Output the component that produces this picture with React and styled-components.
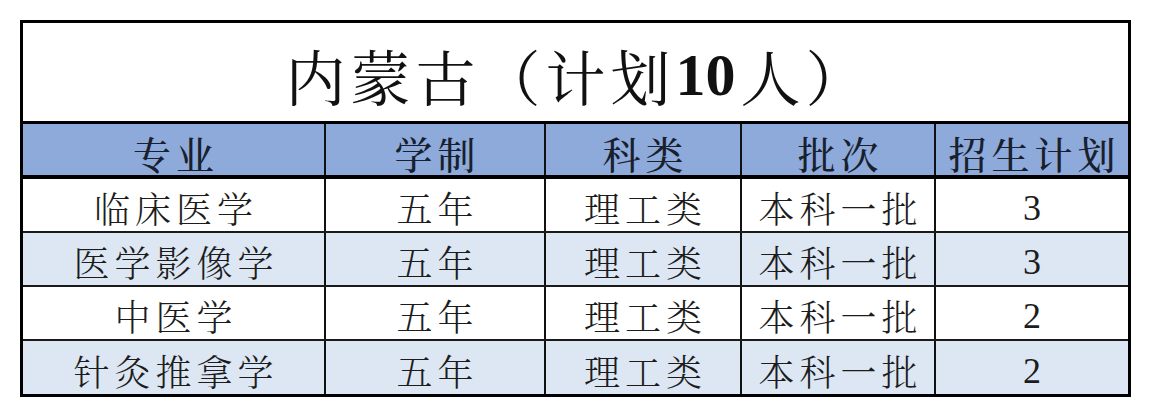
import React from "react";
import styled, { createGlobalStyle } from "styled-components";

const GlobalStyle = createGlobalStyle`
  html, body {
    margin: 0;
    padding: 0;
    background: #ffffff;
  }
  * { box-sizing: border-box; }
`;

const CJK = `"Noto Serif CJK SC", "Noto Sans CJK SC", "Liberation Serif", serif`;
const NUM = `"Liberation Serif", "Noto Serif CJK SC", "Noto Sans CJK SC", serif`;

const Page = styled.div`
  padding: 20px 0 0 20px;
  width: 1154px;
  height: 420px;
`;

const Table = styled.div`
  width: 1111px;
  border: 3px solid #000;
  background: #fff;
  display: flex;
  flex-direction: column;
`;

const Title = styled.div`
  height: 101px;
  border-bottom: 3px solid #000;
  display: flex;
  align-items: center;
  justify-content: center;
  font-family: ${CJK};
  font-size: 60px;
  font-weight: 400;
  letter-spacing: 5px;
  padding: 6px 0 0 5px;
  color: #111;
  line-height: 1;
`;

const TitleNum = styled.span`
  font-family: ${NUM};
  font-weight: 700;
  letter-spacing: 0;
  margin-right: 5px;
`;

const Row = styled.div`
  display: grid;
  grid-template-columns: 301px 220px 196px 194px 194px;
  height: ${(p) => p.$h}px;
  background: ${(p) => p.$bg};
  border-bottom: ${(p) => p.$bb};
`;

const Cell = styled.div`
  display: flex;
  align-items: center;
  justify-content: center;
  border-left: 2px solid #111;
  &:first-child { border-left: none; }
  font-family: ${(p) => (p.$num ? NUM : CJK)};
  font-size: ${(p) => (p.$head ? 38 : 36)}px;
  font-weight: ${(p) => (p.$head ? 500 : 300)};
  letter-spacing: ${(p) => (p.$num ? 0 : 5)}px;
  padding: 6px 0 0 ${(p) => (p.$num ? 0 : 5)}px;
  color: ${(p) => (p.$head ? "#17202c" : "#1c1c1c")};
  line-height: 1;
  white-space: nowrap;
`;

const headers = ["专业", "学制", "科类", "批次", "招生计划"];
const rows = [
  ["临床医学", "五年", "理工类", "本科一批", "3"],
  ["医学影像学", "五年", "理工类", "本科一批", "3"],
  ["中医学", "五年", "理工类", "本科一批", "2"],
  ["针灸推拿学", "五年", "理工类", "本科一批", "2"],
];

export default function App() {
  return (
    <>
      <GlobalStyle />
      <Page>
        <Table>
          <Title>
            <span>内蒙古（计划</span>
            <TitleNum>10</TitleNum>
            <span>人）</span>
          </Title>
          <Row $h={55} $bg="#8eaadb" $bb="4px solid #000">
            {headers.map((h) => (
              <Cell key={h} $head>
                {h}
              </Cell>
            ))}
          </Row>
          {rows.map((r, i) => (
            <Row
              key={r[0]}
              $h={i === rows.length - 1 ? 53 : 54}
              $bg={i % 2 === 0 ? "#ffffff" : "#dde7f3"}
              $bb={i === rows.length - 1 ? "none" : "2px solid #1a1a1a"}
            >
              {r.map((c, j) => (
                <Cell key={j} $num={j === 4}>
                  {c}
                </Cell>
              ))}
            </Row>
          ))}
        </Table>
      </Page>
    </>
  );
}
